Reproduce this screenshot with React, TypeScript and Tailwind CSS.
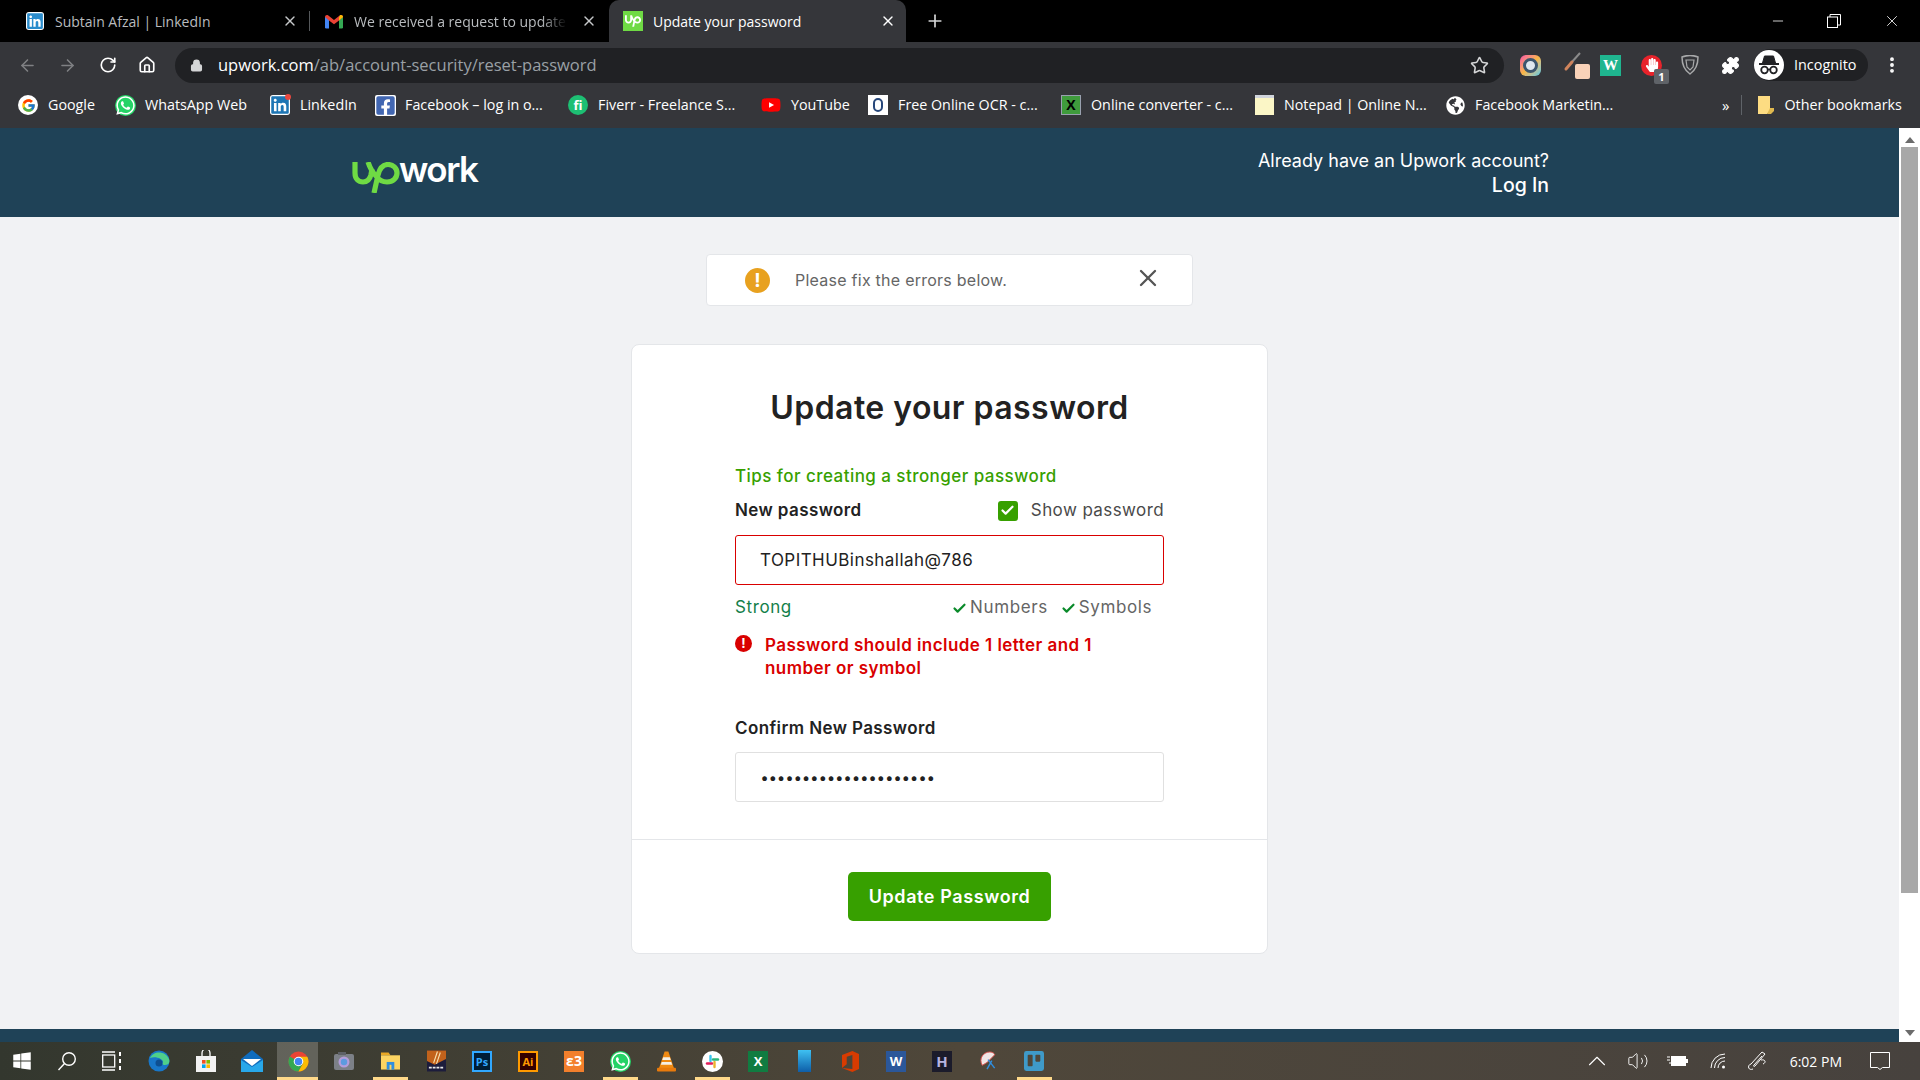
import { X, Plus, ArrowLeft, ArrowRight, RotateCw, Home, Lock, Star, Puzzle, EllipsisVertical, Minus, ChevronUp, Volume2, Check } from "lucide-react";
import { FaLinkedin, FaWhatsapp, FaFacebookSquare, FaYoutube, FaWindows, FaGlobeAmericas, FaHandPaper } from "react-icons/fa";
import { FcGoogle } from "react-icons/fc";
import { SiUpwork, SiTrello } from "react-icons/si";

const uiFont = "font-['Open_Sans',sans-serif]";
const pageFont = "font-['Inter',sans-serif]";

function LinkedinIcon({ className }: { className: string }) {
  return (
    <span className="flex rounded-[3px] bg-white">
      <FaLinkedin className={className} />
    </span>
  );
}

function WhatsappIcon() {
  return (
    <span className="flex h-[21px] w-[21px] items-center justify-center rounded-full bg-[#25d366]">
      <FaWhatsapp className="h-[21px] w-[21px] text-white" />
    </span>
  );
}

const bookmarks = [
  { name: "Google", width: "w-[97px]", icon: <span className="flex h-[20px] w-[20px] items-center justify-center rounded-full bg-white"><FcGoogle className="h-[15px] w-[15px]" /></span> },
  { name: "WhatsApp Web", width: "w-[155px]", icon: <WhatsappIcon /> },
  {
    name: "LinkedIn", width: "w-[105px]", icon: (
      <span className="relative flex">
        <LinkedinIcon className="h-[20px] w-[20px] text-[#1d75b4]" />
        <span className="absolute -right-px -top-px h-[6px] w-[6px] rounded-full bg-[#e8483f]" />
      </span>
    ),
  },
  { name: "Facebook – log in o...", width: "w-[193px]", icon: <span className="flex rounded-[2px] bg-white"><FaFacebookSquare className="h-[21px] w-[21px] text-[#4267b2]" /></span> },
  { name: "Fiverr - Freelance S...", width: "w-[193px]", icon: <span className="flex h-[20px] w-[20px] items-center justify-center rounded-full bg-[#1dbf73] text-[13px] font-bold leading-none text-white">fi</span> },
  {
    name: "YouTube", width: "w-[107px]", icon: (
      <span className="relative flex">
        <span className="absolute inset-[6px] bg-white" />
        <FaYoutube className="relative h-[20px] w-[20px] text-[#f00]" />
      </span>
    ),
  },
  { name: "Free Online OCR - c...", width: "w-[193px]", icon: <span className="flex h-[20px] w-[20px] items-center justify-center bg-white"><span className="h-[14px] w-[10px] rounded-full border-2 border-[#27477a]" /></span> },
  { name: "Online converter - c...", width: "w-[193px]", icon: <span className="flex h-[20px] w-[20px] items-center justify-center border border-gray-400 bg-[#3f9b3c] text-[14px] font-bold leading-none text-black">X</span> },
  { name: "Notepad | Online N...", width: "w-[191px]", icon: <span className="h-[20px] w-[19px] border-t-[3px] border-gray-300 bg-[#fbf6c6]" /> },
  { name: "Facebook Marketin...", width: "w-[278px]", icon: <FaGlobeAmericas className="h-[19px] w-[19px] text-white" /> },
];

function Tile({ className, children }: { className: string; children?: React.ReactNode }) {
  return <span className={`flex h-[21px] w-[20px] items-center justify-center overflow-hidden font-bold leading-none ${className}`}>{children}</span>;
}

const taskbarIcons = [
  { key: "win", width: "w-[44px]", running: false, active: false, icon: <FaWindows className="h-[20px] w-[20px] text-white" /> },
  {
    key: "search", width: "w-[46px]", running: false, active: false, icon: (
      <svg viewBox="0 0 20 20" className="h-[20px] w-[20px]" fill="none" stroke="white" strokeWidth="1.4"><circle cx="12" cy="8" r="6.3" /><path d="M7.5 12.5 1.5 19" /></svg>
    ),
  },
  {
    key: "view", width: "w-[44px]", running: false, active: false, icon: (
      <svg viewBox="0 0 21 20" className="h-[20px] w-[21px]" fill="none" stroke="white" strokeWidth="1.3"><path d="M0 1h13M0 19h13" /><rect x="0.7" y="4" width="12" height="12" /><path d="M18 1v4M18 8v4M18 15v4" strokeWidth="2" /></svg>
    ),
  },
  {
    key: "edge", width: "w-[49px]", running: false, active: false, icon: (
      <svg viewBox="0 0 22 22" className="h-[22px] w-[22px]"><circle cx="11" cy="11" r="10.5" fill="#1877c9" /><path d="M2 8c3-7 15-8 19 1 1 3 0 6-4 6-3 0-3-2-2-3 0-3-7-6-13-4Z" fill="#4fd08a" /><circle cx="11" cy="13" r="3.5" fill="#0e4f91" /></svg>
    ),
  },
  {
    key: "store", width: "w-[46px]", running: false, active: false, icon: (
      <svg viewBox="0 0 20 22" className="h-[22px] w-[20px]"><path d="M6 6V3a4 4 0 0 1 8 0v3" fill="none" stroke="white" strokeWidth="1.3" /><rect y="6" width="20" height="16" fill="#f2f2f2" /><rect x="6" y="10" width="3.6" height="3.6" fill="#f25022" /><rect x="10.4" y="10" width="3.6" height="3.6" fill="#7fba00" /><rect x="6" y="14.4" width="3.6" height="3.6" fill="#00a4ef" /><rect x="10.4" y="14.4" width="3.6" height="3.6" fill="#ffb900" /></svg>
    ),
  },
  {
    key: "mail", width: "w-[46px]", running: false, active: false, icon: (
      <svg viewBox="0 0 22 22" className="h-[22px] w-[22px]"><path d="M11 0 22 9v13H0V9Z" fill="#0f6cbd" /><path d="M2 9h18l-9 7Z" fill="#fff" /><path d="M0 10l11 7 11-7v12H0Z" fill="#28a8ea" /></svg>
    ),
  },
  {
    key: "chrome", width: "w-[46px]", running: true, active: true, icon: (
      <svg viewBox="0 0 22 22" className="relative h-[21px] w-[21px]"><circle cx="11" cy="11" r="10.5" fill="#ea4335" /><path d="M11 11 1.9 5.7A10.5 10.5 0 0 0 11 21.5l5-9Z" fill="#34a853" /><path d="M11 6h9.2a10.5 10.5 0 0 1-9.2 15.5l5-9Z" fill="#fbbc05" /><circle cx="11" cy="11" r="5" fill="#fff" /><circle cx="11" cy="11" r="3.9" fill="#4285f4" /></svg>
    ),
  },
  {
    key: "camera", width: "w-[46px]", running: false, active: false, icon: (
      <svg viewBox="0 0 20 20" className="h-[20px] w-[20px]"><rect y="3" width="20" height="16" rx="2" fill="#7c8087" /><rect x="4" y="1" width="8" height="3" fill="#5e6167" /><circle cx="10" cy="11" r="5.5" fill="#b39ddb" /><circle cx="10" cy="11" r="3.2" fill="#5c9be0" /></svg>
    ),
  },
  {
    key: "files", width: "w-[46px]", running: true, active: false, icon: (
      <svg viewBox="0 0 20 20" className="h-[20px] w-[19px]"><path d="M0 1h8l2 3H0Z" fill="#e9a825" /><rect y="4" width="20" height="15" fill="#fcd462" /><rect x="6" y="11" width="8" height="8" fill="#2f8fe0" /><rect x="9" y="14" width="2" height="5" fill="#fcd462" /></svg>
    ),
  },
  {
    key: "inpage", width: "w-[46px]", running: false, active: false, icon: (
      <svg viewBox="0 0 20 22" className="h-[22px] w-[19px]"><rect width="20" height="22" fill="#1c1c3c" /><path d="M0 0h20v9L8 15 0 11Z" fill="#c2621b" /><path d="M11 1 7 13M14 2l-4 12" stroke="#f7e0b0" strokeWidth="1.2" /><path d="M2 18h16" stroke="#e8e8e8" strokeWidth="2" strokeDasharray="3 1" /></svg>
    ),
  },
  { key: "ps", width: "w-[46px]", running: false, active: false, icon: <Tile className="border-2 border-[#31a8ff] bg-[#001e36] text-[11px] text-[#31a8ff]">Ps</Tile> },
  { key: "ai", width: "w-[46px]", running: false, active: false, icon: <Tile className="border-2 border-[#ff9a00] bg-[#330000] text-[11px] text-[#ff9a00]">Ai</Tile> },
  { key: "xampp", width: "w-[46px]", running: false, active: false, icon: <Tile className="bg-[#f37f2c] text-[14px] text-white">ε3</Tile> },
  { key: "wa", width: "w-[46px]", running: true, active: false, icon: <WhatsappIcon /> },
  {
    key: "vlc", width: "w-[46px]", running: false, active: false, icon: (
      <svg viewBox="0 0 20 22" className="h-[22px] w-[19px]"><path d="M8 1h4l6 18H2Z" fill="#f08a12" /><path d="M6.5 7h7l1 3h-9ZM5 12h10l1 3H4Z" fill="#f5f0e6" /><rect y="18" width="20" height="4" rx="1" fill="#e87a0c" /></svg>
    ),
  },
  {
    key: "slack", width: "w-[46px]", running: true, active: false, icon: (
      <svg viewBox="0 0 21 21" className="h-[21px] w-[21px]" strokeWidth="2.4" strokeLinecap="round"><circle cx="10.5" cy="10.5" r="10.5" fill="white" /><path d="M8.5 5v5" stroke="#36c5f0" /><path d="M5 12.5h5" stroke="#e01e5a" /><path d="M12.5 11v5" stroke="#ecb22e" /><path d="M11 8.5h5" stroke="#2eb67d" /></svg>
    ),
  },
  { key: "excel", width: "w-[46px]", running: false, active: false, icon: <Tile className="bg-[#107c41] text-[13px] text-white">X</Tile> },
  { key: "blue", width: "w-[46px]", running: false, active: false, icon: <span className="h-[22px] w-[13px] bg-gradient-to-b from-[#3fc1f2] to-[#0f5ea8]" /> },
  {
    key: "office", width: "w-[46px]", running: false, active: false, icon: (
      <svg viewBox="0 0 18 22" className="h-[21px] w-[17px]"><path d="M0 4 11 0l7 3v16l-7 3-11-4 11 1V4L5 6v8l-5 4Z" fill="#d83b01" /></svg>
    ),
  },
  { key: "word", width: "w-[46px]", running: false, active: false, icon: <Tile className="bg-[#2b579a] text-[13px] text-white">W</Tile> },
  { key: "h", width: "w-[46px]", running: false, active: false, icon: <Tile className="bg-[#1b1b2b] text-[15px] text-[#b7b4e0]">H</Tile> },
  {
    key: "snip", width: "w-[46px]", running: false, active: false, icon: (
      <svg viewBox="0 0 20 22" className="h-[21px] w-[20px]"><path d="M4 15C0 8 5 1 12 1c3 0 5 2 5 3L9 12Z" fill="#f0e6e6" stroke="#d9534f" /><path d="M10 9 17 18M14 10 9 19" stroke="#2f8fe0" strokeWidth="1.5" fill="none" /></svg>
    ),
  },
  { key: "trello", width: "w-[46px]", running: true, active: false, icon: <SiTrello className="h-[20px] w-[20px] text-[#3f9ac9]" /> },
];

function ChromeChrome() {
  return (
    <div className={`text-[14px] ${uiFont}`}>
      {/* tabs */}
      <div className="flex h-[42px] items-center bg-black">
        <div className="flex h-full w-[309px] items-center pl-[26px] pr-[11px]">
          <LinkedinIcon className="h-[18px] w-[18px] shrink-0 text-[#2a8ccc]" />
          <span className="ml-[11px] flex-1 text-[14px] text-[#b9bcbf]">Subtain Afzal | LinkedIn</span>
          <X className="h-[16px] w-[16px] text-[#c7c9cb]" strokeWidth={2} />
        </div>
        <div className="h-[20px] w-px bg-[#55585b]" />
        <div className="flex h-full w-[299px] items-center pl-[15px] pr-[12px]">
          <svg viewBox="0 0 18 14" className="h-[15px] w-[18px] shrink-0">
            <path d="M0 2.5 4 3v11H1.2A1.2 1.2 0 0 1 0 12.8Z" fill="#4285f4" />
            <path d="M18 2.5 14 3v11h2.8a1.2 1.2 0 0 0 1.2-1.2Z" fill="#34a853" />
            <path d="M0 2.5C0 .5 2 0 3 .8L9 5.5 15 .8c1-.8 3-.3 3 1.7L14 6 9 9.8 4 6Z" fill="#ea4335" />
            <path d="M14 3 15 .8c1-.8 3-.3 3 1.7L14 6Z" fill="#fbbc04" />
          </svg>
          <span className="ml-[11px] flex-1 whitespace-nowrap text-[14px] text-[#b9bcbf] [mask-image:linear-gradient(to_right,black_88%,transparent)]">We received a request to update</span>
          <X className="ml-[14px] h-[16px] w-[16px] shrink-0 text-[#c7c9cb]" strokeWidth={2} />
        </div>
        <div className="flex h-full w-[297px] items-center rounded-t-[10px] bg-[#35363a] pl-[14px] pr-[10px]">
          <span className="flex h-[20px] w-[20px] items-center justify-center bg-[#6fda44]"><SiUpwork className="h-[16px] w-[16px] text-white" /></span>
          <span className="ml-[10px] flex-1 text-[14px] text-white">Update your password</span>
          <X className="h-[16px] w-[16px] text-white" strokeWidth={2} />
        </div>
        <Plus className="ml-[19px] h-[20px] w-[20px] text-[#d5d6d7]" strokeWidth={2} />
        <div className="ml-auto flex h-full items-center pr-[19px]">
          <Minus className="h-[16px] w-[16px] text-white" strokeWidth={1.2} />
          <svg viewBox="0 0 14 14" className="ml-[41px] h-[14px] w-[14px]" fill="none" stroke="white" strokeWidth="1"><rect x="0.5" y="3" width="10" height="10.5" /><path d="M3 3V0.5h10.5V11H10.5" /></svg>
          <X className="ml-[42px] h-[18px] w-[18px] text-white" strokeWidth={1.1} />
        </div>
      </div>

      {/* toolbar */}
      <div className="flex h-[46px] items-center bg-[#35363a] pl-[18px] pr-[18px]">
        <ArrowLeft className="h-[19px] w-[19px] text-[#7f8083]" strokeWidth={2} />
        <ArrowRight className="ml-[21px] h-[19px] w-[19px] text-[#7f8083]" strokeWidth={2} />
        <RotateCw className="ml-[22px] h-[18px] w-[18px] text-white" strokeWidth={2.2} />
        <Home className="ml-[21px] h-[18px] w-[18px] text-white" strokeWidth={2.2} />
        <div className="ml-[19px] flex h-[35px] w-[1329px] items-center rounded-full bg-[#202124] pl-[15px] pr-[15px]">
          <Lock className="h-[13px] w-[13px] fill-[#d5d6d7] text-[#d5d6d7]" strokeWidth={2.5} />
          <span className="ml-[15px] text-[16.5px] text-white">upwork.com<span className="text-[#9aa0a6]">/ab/account-security/reset-password</span></span>
          <Star className="ml-auto h-[19px] w-[19px] text-[#d5d6d7]" strokeWidth={2} />
        </div>
        <span className="ml-[16px] flex h-[21px] w-[21px] items-center justify-center rounded-[6px] bg-gradient-to-br from-[#f54ea2] via-[#f9b642] to-[#38c7e8]">
          <span className="h-[15px] w-[15px] rounded-full border-[3px] border-[#3d566e] bg-[#dfe7ee]" />
        </span>
        <span className="relative ml-[22px] h-[27px] w-[27px]">
          <svg viewBox="0 0 20 20" className="absolute left-0 top-0 h-[20px] w-[20px]"><path d="M17 1 8 11" stroke="#8a8a8a" strokeWidth="2" /><path d="M9 10 3 17" stroke="#d0845c" strokeWidth="3" strokeLinecap="round" /></svg>
          <span className="absolute bottom-0 right-0 h-[15px] w-[15px] rounded-[2px] bg-[#f9d2b8]" />
        </span>
        <span className="ml-[10px] flex h-[21px] w-[21px] items-center justify-center bg-[#1fb58f] font-['Liberation_Serif',serif] text-[15px] font-bold text-white">W</span>
        <span className="relative ml-[20px] flex h-[21px] w-[21px] items-center justify-center rounded-full bg-[#e8232b]">
          <FaHandPaper className="h-[14px] w-[14px] text-white" />
          <span className="absolute -bottom-[8px] -right-[7px] flex h-[15px] w-[15px] items-center justify-center rounded-[2px] bg-[#5f6368] text-[11px] font-bold leading-none text-white">1</span>
        </span>
        <svg viewBox="0 0 18 20" className="ml-[19px] h-[20px] w-[18px]" fill="none" stroke="#a8a9aa" strokeWidth="1.5"><path d="M1 2c5-2 11-2 16 0 0 8-2 13-8 17C3 15 1 10 1 2Z" /><path d="M5 5h8l-1 7-3 3-3-3Z" strokeWidth="1.2" /></svg>
        <Puzzle className="ml-[22px] h-[19px] w-[19px] fill-white text-white" strokeWidth={1.5} />
        <div className="ml-[14px] flex h-[32px] w-[114px] items-center rounded-full bg-[#202124] pl-0">
          <span className="flex h-[30px] w-[30px] items-center justify-center rounded-full bg-white">
            <svg viewBox="0 0 30 30" className="h-[30px] w-[30px]" fill="none" stroke="#202124">
              <path d="M10.5 6h9l2 7h-13Z" fill="#202124" strokeWidth="1" />
              <path d="M5 14h20" strokeWidth="2" />
              <circle cx="10.5" cy="20" r="3.3" strokeWidth="1.8" />
              <circle cx="19.5" cy="20" r="3.3" strokeWidth="1.8" />
              <path d="M13.5 19.5h3" strokeWidth="1.5" />
            </svg>
          </span>
          <span className="ml-[10px] text-[14.4px] text-white">Incognito</span>
        </div>
        <EllipsisVertical className="ml-[14px] h-[20px] w-[20px] text-white" strokeWidth={2.6} />
      </div>

      {/* bookmarks */}
      <div className="flex h-[40px] items-center bg-[#35363a] pb-[6px] pl-[18px] pr-[18px]">
        {bookmarks.map((b) => (
          <div key={b.name} className={`flex items-center ${b.width}`}>
            <span className="flex w-[20px] shrink-0 items-center justify-center">{b.icon}</span>
            <span className="ml-[10px] whitespace-nowrap text-[14.3px] text-white">{b.name}</span>
          </div>
        ))}
        <span className="ml-[-1px] text-[15px] text-white">»</span>
        <div className="ml-[12px] h-[20px] w-px bg-[#5f6368]" />
        <svg viewBox="0 0 16 20" className="ml-[16px] h-[20px] w-[16px]"><path d="M0 1h12v15l-3 3H0Z" fill="#fddc82" /><path d="M12 13h4v3l-3 3H9Z" fill="#e0b94f" /></svg>
        <span className="ml-[10px] whitespace-nowrap text-[14.3px] text-white">Other bookmarks</span>
      </div>
    </div>
  );
}

function UpworkLogo() {
  return (
    <div className="flex items-end">
      <svg viewBox="0 0 48 31" className="h-[31px] w-[48px]" fill="none" stroke="#6fda44" strokeWidth="5.2">
        <path d="M3 0V11C3 17 6.5 20 11 20C15.5 20 18 17 19 12.5L20 7" />
        <path d="M16 0C18 6 21 11 24 14C27 18 31 20 35 20C41 20 45 16 45 11C45 6 41 2.5 36 2.5C30 2.5 27.5 7 26 13L22 31" />
      </svg>
      <span className={`-ml-px mb-[6px] text-[35px] font-semibold leading-[35px] tracking-[-1.5px] text-white ${pageFont}`}>work</span>
    </div>
  );
}

function Alert() {
  return (
    <div className="flex h-[52px] w-[487px] items-center rounded-[4px] border border-[#e4e6e9] bg-white pl-[38px] pr-[30px]">
      <span className="flex h-[25px] w-[25px] items-center justify-center rounded-full bg-[#e8a11f] text-[19px] font-bold leading-none text-white">!</span>
      <span className="ml-[25px] text-[16px] tracking-[0.25px] text-[#656565]">Please fix the errors below.</span>
      <X className="ml-auto -mt-[5px] h-[28px] w-[28px] text-[#555]" strokeWidth={2} />
    </div>
  );
}

function PasswordCard() {
  return (
    <div className="mt-[38px] w-[637px] rounded-[8px] border border-[#e4e6e9] bg-white">
      <div className="h-[494px] px-[103px] pt-[43px]">
        <h1 className="text-center text-[32px] font-semibold leading-[40px] tracking-[0.45px] text-[#222]">Update your password</h1>
        <div className="mt-[38px] text-[17px] font-medium leading-[20px] tracking-[0.45px] text-[#37a000]">Tips for creating a stronger password</div>
        <div className="mt-[10px] flex h-[30px] items-center justify-between">
          <span className="text-[17px] font-semibold tracking-[0.4px] text-[#222]">New password</span>
          <span className="-mt-[1px] flex items-center">
            <span className="flex h-[20px] w-[20px] items-center justify-center rounded-[3px] bg-[#37a000]"><Check className="h-[15px] w-[15px] text-white" strokeWidth={3.5} /></span>
            <span className="ml-[13px] text-[17px] tracking-[0.4px] text-[#4a4a4a]">Show password</span>
          </span>
        </div>
        <div className="mt-[9px] flex h-[50px] items-center rounded-[3px] border border-[#d90000] pl-[24px] pt-[2px] text-[17px] tracking-[0.45px] text-[#222]">TOPITHUBinshallah@786</div>
        <div className="mt-[12px] flex h-[22px] items-center text-[17px] tracking-[0.6px]">
          <span className="text-[#14804a]">Strong</span>
          <span className="ml-auto flex items-center text-[#656565]">
            <Check className="h-[15px] w-[15px] text-[#0a8a2a]" strokeWidth={3.5} />
            <span className="ml-[3px]">Numbers</span>
            <Check className="ml-[13px] h-[15px] w-[15px] text-[#0a8a2a]" strokeWidth={3.5} />
            <span className="ml-[3px] mr-[12px]">Symbols</span>
          </span>
        </div>
        <div className="mt-[15px] flex">
          <span className="mt-[1px] flex h-[17px] w-[17px] shrink-0 items-center justify-center rounded-full bg-[#d90000] text-[13px] font-bold leading-none text-white">!</span>
          <span className="ml-[13px] w-[345px] text-[17px] font-semibold leading-[23px] tracking-[0.45px] text-[#d90000]">Password should include 1 letter and 1 number or symbol</span>
        </div>
        <div className="mt-[36px] text-[17px] font-semibold leading-[24px] tracking-[0.4px] text-[#222]">Confirm New Password</div>
        <div className="mt-[12px] flex h-[50px] items-center rounded-[3px] border border-[#e0e0e0] pl-[25px] text-[#222]">
          <span className="text-[15px] font-bold leading-none tracking-[1.2px]">•••••••••••••••••••••</span>
        </div>
      </div>
      <div className="flex h-[114px] justify-center border-t border-[#e4e6e9] pt-[32px]">
        <button className="h-[49px] w-[203px] rounded-[5px] bg-[#37a000] text-[18px] font-semibold tracking-[0.6px] text-white">Update Password</button>
      </div>
    </div>
  );
}

function Scrollbar() {
  return (
    <div className="flex w-[21px] flex-col items-center bg-white">
      <svg viewBox="0 0 10 6" className="mt-[9px] h-[6px] w-[10px]"><path d="M5 0 10 6H0Z" fill="#6b6b6b" /></svg>
      <div className="mt-[4px] h-[746px] w-[17px] bg-[#a8a8a8]" />
      <div className="flex-1" />
      <svg viewBox="0 0 10 6" className="mb-[6px] h-[6px] w-[10px]"><path d="M0 0H10L5 6Z" fill="#6b6b6b" /></svg>
    </div>
  );
}

function Taskbar() {
  return (
    <div className={`flex h-[38px] items-center bg-gradient-to-r from-[#33372e] via-[#4f473a] to-[#47423e] ${uiFont}`}>
      {taskbarIcons.map((t) => (
        <div key={t.key} className={`relative flex h-full items-center justify-center ${t.width}`}>
          {t.active && <span className="absolute inset-y-0 left-[2px] right-[3px] bg-white/20" />}
          {t.icon}
          {t.running && <span className={`absolute bottom-0 h-[3px] bg-[#ffd98a] ${t.active ? "left-[2px] right-[3px]" : "left-[6px] right-[5px]"}`} />}
        </div>
      ))}
      <div className="ml-auto flex h-full items-center pr-[30px] text-white">
        <ChevronUp className="h-[30px] w-[30px]" strokeWidth={0.9} />
        <Volume2 className="ml-[15px] h-[22px] w-[22px]" strokeWidth={1} />
        <svg viewBox="0 0 21 12" className="ml-[18px] h-[12px] w-[21px]"><path d="M0 2h3M0 5h3M2 8h3" stroke="white" /><rect x="4" y="1" width="15" height="10" fill="white" /><rect x="19" y="4" width="2" height="4" fill="white" /></svg>
        <svg viewBox="0 0 16 16" className="ml-[22px] h-[16px] w-[16px]" fill="none" stroke="white" strokeWidth="1"><path d="M1 15A14 14 0 0 1 15 1M4.5 15A10.5 10.5 0 0 1 15 4.5M8 15A7 7 0 0 1 15 8" /><circle cx="13.5" cy="14" r="1.5" fill="white" stroke="none" /></svg>
        <svg viewBox="0 0 20 20" className="ml-[21px] h-[20px] w-[20px]" fill="none" stroke="white" strokeWidth="1"><path d="M6 18C1 20 0 14 4 13L15 1l3 2L8 15c-1 1-2 0-1-1L15 5" /><path d="M14 9c5-1 5 3 2 4" /></svg>
        <span className="ml-[23px] text-[14px]">6:02 PM</span>
        <svg viewBox="0 0 20 18" className="ml-[28px] h-[18px] w-[20px]" fill="none" stroke="white" strokeWidth="1"><path d="M0.5 0.5h19v15h-7l-2.5 2-2.5-2h-7Z" /></svg>
      </div>
    </div>
  );
}

export default function App() {
  return (
    <div className="flex h-[1080px] w-[1920px] flex-col overflow-hidden bg-[#f1f2f4]">
      <ChromeChrome />
      <div className="flex flex-1 overflow-hidden">
        <div className={`flex flex-1 flex-col ${pageFont}`}>
          <header className="flex h-[89px] items-center justify-between bg-[#1f4257] pl-[352px] pr-[350px]">
            <UpworkLogo />
            <div className="text-right text-white">
              <div className="text-[18px] leading-[25px]">Already have an Upwork account?</div>
              <div className="text-[19.5px] font-medium leading-[25px]">Log In</div>
            </div>
          </header>
          <main className="flex flex-1 flex-col items-center pt-[37px]">
            <Alert />
            <PasswordCard />
          </main>
          <div className="h-[13px] bg-[#1f4257]" />
        </div>
        <Scrollbar />
      </div>
      <Taskbar />
    </div>
  );
}
